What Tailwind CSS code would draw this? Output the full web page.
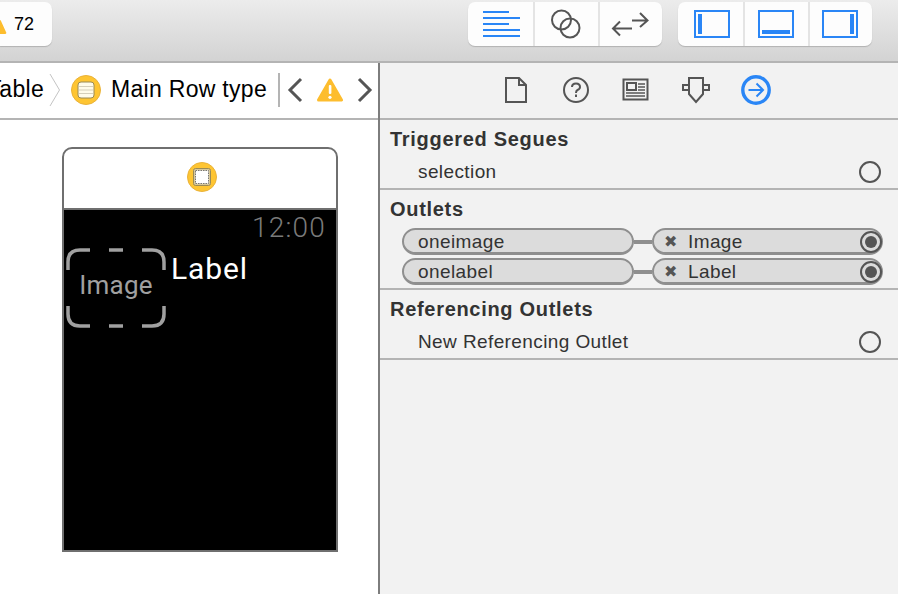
<!DOCTYPE html>
<html lang="en">
<head>
    <meta charset="UTF-8">
    <title>Interface Builder</title>
    <script src="https://cdn.jsdelivr.net/npm/@tailwindcss/browser@4"></script>
</head>
<body class="w-[898px] h-[594px] overflow-hidden bg-[#f2f2f2] font-['Liberation_Sans',sans-serif] text-[#333]">
    <!-- toolbar -->
    <div class="h-[63px] flex items-start pt-[2px] border-b-2 border-[#b4b4b4] bg-gradient-to-b from-[#ececec] to-[#d3d3d3]">
        <div class="w-[52px] h-[44px] bg-[#fdfdfd] rounded-r-[7px] shadow-[0_1px_1px_rgba(0,0,0,0.18)] flex items-center overflow-hidden">
            <svg class="w-[7px] h-[16px] mt-[5px] shrink-0" viewBox="0 0 7 16"><path d="M-2 1 L-9 15 H5 Q7 15 6 13 L1 2 Q-1 -1 -2 1 Z" fill="#fdbd2e"/></svg>
            <span class="ml-[7px] text-[18px] text-black">72</span>
        </div>
        <div class="ml-[416px] w-[194px] h-[44px] bg-[#fdfdfd] rounded-[7px] shadow-[0_1px_1px_rgba(0,0,0,0.18)] flex">
            <div class="w-[67px] border-r-2 border-[#e4e4e4] flex items-center justify-center">
                <svg class="ml-[3px]" width="38" height="28" viewBox="0 0 38 28" fill="#2a86f6"><rect y="1" width="26" height="2"/><rect y="7" width="37" height="2"/><rect y="13" width="26" height="2"/><rect y="19" width="37" height="2"/><rect y="25" width="37" height="2"/></svg>
            </div>
            <div class="w-[65px] border-r-2 border-[#e4e4e4] flex items-center justify-center">
                <svg class="-ml-[2px]" width="34" height="30" viewBox="0 0 34 30" fill="none" stroke="#555" stroke-width="2"><circle cx="12.5" cy="11" r="9.5"/><circle cx="21" cy="19" r="9.5"/></svg>
            </div>
            <div class="flex-1 flex items-center justify-center">
                <svg class="-ml-[2px]" width="38" height="28" viewBox="0 0 38 28" fill="none" stroke="#555" stroke-width="2"><path d="M21 10.5 H36 M29 3 L36.5 10.5 L29 17"/><path d="M2 18.5 H21 M9 11.5 L2 18.5 L9 25.5"/></svg>
            </div>
        </div>
        <div class="ml-[16px] w-[194px] h-[44px] bg-[#fdfdfd] rounded-[7px] shadow-[0_1px_1px_rgba(0,0,0,0.18)] flex">
            <div class="w-[67px] border-r-2 border-[#e4e4e4] flex items-center justify-center">
                <div class="ml-[2px] w-[36px] h-[28px] border-2 border-[#2a86f6] p-[2px]"><div class="w-[4px] h-full bg-[#2a86f6]"></div></div>
            </div>
            <div class="w-[65px] border-r-2 border-[#e4e4e4] flex items-center justify-center">
                <div class="-ml-[2px] w-[36px] h-[28px] border-2 border-[#2a86f6] p-[2px] flex items-end"><div class="w-full h-[4px] bg-[#2a86f6]"></div></div>
            </div>
            <div class="flex-1 flex items-center justify-center">
                <div class="-ml-[2px] w-[36px] h-[28px] border-2 border-[#2a86f6] p-[2px] flex justify-end"><div class="w-[4px] h-full bg-[#2a86f6]"></div></div>
            </div>
        </div>
    </div>

    <div class="flex h-[531px]">
        <!-- editor -->
        <div class="w-[380px] shrink-0 border-r-2 border-[#7d7d7d] bg-white flex flex-col">
            <div class="h-[57px] flex items-center pb-[2px] border-b-2 border-[#b4b4b4] text-black text-[23px] tracking-[0.3px]">
                <div class="w-[44px] overflow-hidden flex justify-end"><span>Table</span></div>
                <svg class="ml-[5px]" width="12" height="34" viewBox="0 0 12 34" fill="none" stroke="#c4c4c4"><path d="M1 1 L10.5 17 L1 33"/></svg>
                <svg class="ml-[10px]" width="30" height="30" viewBox="0 0 30 30"><circle cx="15" cy="15" r="14.5" fill="#fec532" stroke="#e9b23a"/><rect x="7" y="7" width="16" height="16" rx="3" fill="#fffbe9" stroke="#9a8a55"/><path d="M8 11.5 H22 M8 15 H22 M8 18.5 H22" stroke="#d5cfba"/></svg>
                <span class="ml-[10px] w-[167px] whitespace-nowrap">Main Row type</span>
                <div class="w-[2px] h-[34px] bg-[#b4b4b4]"></div>
                <svg class="ml-[7px]" width="16" height="26" viewBox="0 0 16 26" fill="none" stroke="#555" stroke-width="3"><path d="M14 2 L3 13 L14 24"/></svg>
                <svg class="ml-[14px]" width="26" height="24" viewBox="0 0 26 24"><path d="M13 2 L24.5 22 H1.5 Z" fill="#fdbd2e" stroke="#fdbd2e" stroke-width="3" stroke-linejoin="round"/><rect x="11.8" y="7" width="2.6" height="9" rx="1" fill="#fff"/><circle cx="13" cy="19.3" r="1.6" fill="#fff"/></svg>
                <svg class="ml-[14px]" width="16" height="26" viewBox="0 0 16 26" fill="none" stroke="#555" stroke-width="3"><path d="M2 2 L13 13 L2 24"/></svg>
            </div>
            <!-- watch scene -->
            <div class="ml-[62px] mt-[27px] w-[276px] h-[405px] rounded-t-[10px] border-2 border-[#6f6f6f] overflow-hidden flex flex-col">
                <div class="h-[61px] pb-[3px] border-b-2 border-[#6f6f6f] flex items-center justify-center shrink-0">
                    <svg class="ml-[4px]" width="30" height="30" viewBox="0 0 30 30"><circle cx="15" cy="15" r="14.5" fill="#fec532" stroke="#e9b23a"/><rect x="6.5" y="6.5" width="17" height="17" rx="2" fill="#d9c99a" stroke="#9a8a55"/><rect x="8.5" y="8.5" width="13" height="13" fill="#fff" stroke="#777" stroke-dasharray="1.5 1"/></svg>
                </div>
                <div class="flex-1 bg-black relative">
                    <div class="text-right pr-[10px] pt-[2px] text-[28px] leading-[32px] text-[#7a7a7a] font-light font-['Roboto',sans-serif] tracking-[1.2px]">12:00</div>
                    <div class="flex mt-[4px] ml-[2px]">
                        <div class="relative w-[100px] h-[80px] flex items-center justify-center pb-[6px] text-[26px] text-[#a0a0a0] font-['Roboto',sans-serif] tracking-[0.2px]">
                            <svg class="absolute inset-0" width="100" height="80" viewBox="0 0 100 80" fill="none" stroke="#a0a0a0" stroke-width="3.5"><path d="M2 22 V14 Q2 2 14 2 H24"/><path d="M43 2 H57"/><path d="M76 2 H86 Q98 2 98 14 V22"/><path d="M2 58 V66 Q2 78 14 78 H24"/><path d="M43 78 H57"/><path d="M76 78 H86 Q98 78 98 66 V58"/></svg>
                            <span class="relative">Image</span>
                        </div>
                        <span class="ml-[5px] text-[30px] leading-[42px] text-white font-['Roboto',sans-serif] tracking-[0.9px]">Label</span>
                    </div>
                </div>
            </div>
        </div>

        <!-- inspector -->
        <div class="flex-1 flex flex-col text-[19px] tracking-[0.4px]">
            <div class="h-[57px] flex items-center pb-[2px] border-b-2 border-[#b4b4b4] pl-[124px]">
                <svg width="24" height="28" viewBox="0 0 24 28" fill="none" stroke="#555" stroke-width="2"><path d="M2 2 H15 L22 9 V26 H2 Z M15 2 V9 H22"/></svg>
                <svg class="ml-[34px]" width="28" height="28" viewBox="0 0 28 28" fill="none" stroke="#555" stroke-width="2"><circle cx="14" cy="14" r="12"/><path d="M10 11 Q10 7.5 14 7.5 Q18 7.5 18 11 Q18 13 15.5 14 Q14 14.8 14 17"/><rect x="13" y="18.5" width="2" height="2.5" fill="#555" stroke="none"/></svg>
                <svg class="ml-[32px]" width="28" height="24" viewBox="0 0 28 24" fill="none" stroke="#555" stroke-width="2"><rect x="1" y="1" width="24" height="20" transform="translate(0.5 0.5)"/><rect x="5" y="5" width="9" height="7"/><path d="M16 6 H23 M16 9 H23 M16 12 H23 M4 15 H23 M4 18 H23" stroke-width="1.5"/></svg>
                <svg class="ml-[32px]" width="28" height="28" viewBox="0 0 28 28" fill="none" stroke="#555" stroke-width="2"><path d="M7 2 H21 V18 L14 26 L7 18 Z"/><path d="M7 9 H1 V14 H7 M21 9 H27 V14 H21"/></svg>
                <svg class="ml-[31px]" width="30" height="30" viewBox="0 0 30 30" fill="none" stroke="#2a86f6"><circle cx="15" cy="15" r="13.2" stroke-width="3.4"/><path d="M7.5 15 H22 M15.5 8.5 L22 15 L15.5 21.5" stroke-width="2"/></svg>
            </div>

            <div class="h-[70px] border-b-2 border-[#b4b4b4] pl-[10px]">
                <div class="pt-[7px] h-[38px] text-[20px] tracking-[0.7px] font-bold leading-[24px]">Triggered Segues</div>
                <div class="pl-[28px] pr-[17px] flex items-center justify-between h-[27px]">
                    <span class="mt-[1px]">selection</span>
                    <span class="w-[22px] h-[22px] rounded-full border-2 border-[#555]"></span>
                </div>
            </div>

            <div class="h-[100px] border-b-2 border-[#b4b4b4] pl-[10px]">
                <div class="pt-[7px] h-[38px] text-[20px] tracking-[0.7px] font-bold leading-[24px]">Outlets</div>
                <div class="flex flex-col gap-[3px] pl-[12px]">
                    <div class="flex items-center h-[27px]">
                        <div class="w-[232px] h-full rounded-full border-2 border-b-[3px] border-[#8f8f8f] bg-[#dcdcdc] pl-[14px] pt-[2px] flex items-center">oneimage</div>
                        <div class="w-[18px] h-[4px] bg-[#8f8f8f]"></div>
                        <div class="w-[231px] h-full rounded-full border-2 border-b-[3px] border-[#8f8f8f] bg-[#dcdcdc] flex items-center pl-[10px] pt-[2px]">
                            <span class="w-[14px] text-[16px] leading-none text-[#555]">✖</span>
                            <span class="ml-[10px] flex-1">Image</span>
                            <span class="w-[22px] h-[22px] -mr-[1px] rounded-full border-2 border-[#555] p-[3px]"><span class="block w-full h-full rounded-full bg-[#555]"></span></span>
                        </div>
                    </div>
                    <div class="flex items-center h-[27px]">
                        <div class="w-[232px] h-full rounded-full border-2 border-b-[3px] border-[#8f8f8f] bg-[#dcdcdc] pl-[14px] pt-[2px] flex items-center">onelabel</div>
                        <div class="w-[18px] h-[4px] bg-[#8f8f8f]"></div>
                        <div class="w-[231px] h-full rounded-full border-2 border-b-[3px] border-[#8f8f8f] bg-[#dcdcdc] flex items-center pl-[10px] pt-[2px]">
                            <span class="w-[14px] text-[16px] leading-none text-[#555]">✖</span>
                            <span class="ml-[10px] flex-1">Label</span>
                            <span class="w-[22px] h-[22px] -mr-[1px] rounded-full border-2 border-[#555] p-[3px]"><span class="block w-full h-full rounded-full bg-[#555]"></span></span>
                        </div>
                    </div>
                </div>
            </div>

            <div class="h-[70px] border-b-2 border-[#b4b4b4] pl-[10px]">
                <div class="pt-[7px] h-[38px] text-[20px] tracking-[0.7px] font-bold leading-[24px]">Referencing Outlets</div>
                <div class="pl-[28px] pr-[17px] flex items-center justify-between h-[27px]">
                    <span class="mt-[1px]">New Referencing Outlet</span>
                    <span class="w-[22px] h-[22px] rounded-full border-2 border-[#555]"></span>
                </div>
            </div>
        </div>
    </div>
</body>
</html>
